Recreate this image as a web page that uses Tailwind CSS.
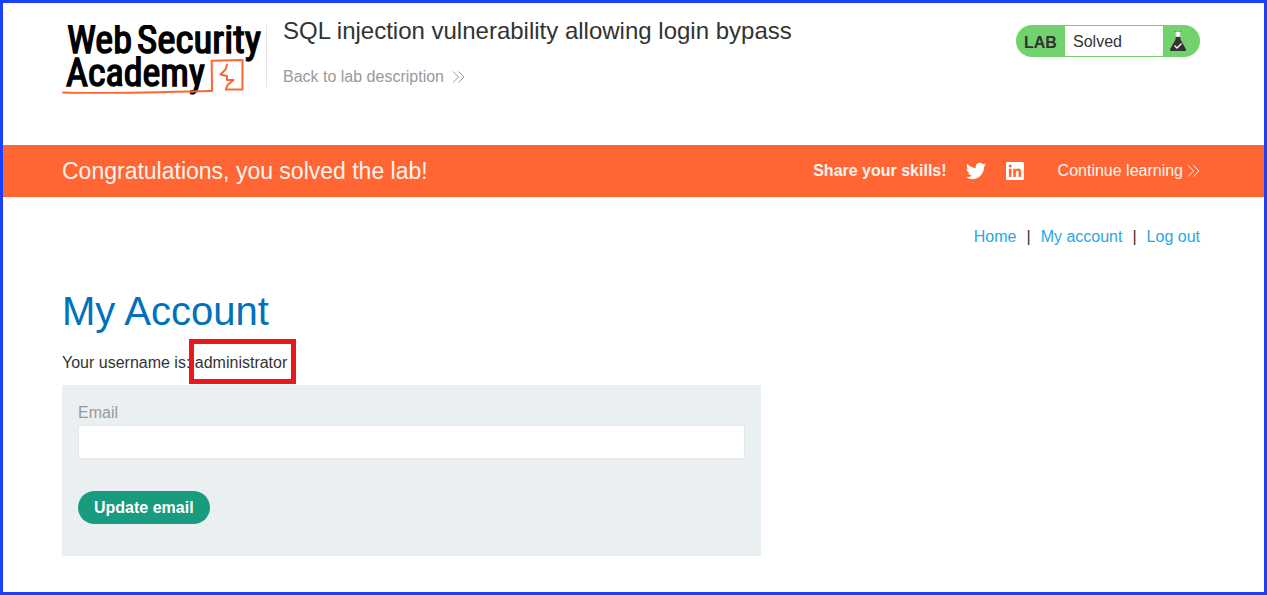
<!DOCTYPE html>
<html lang="en">
<head>
<meta charset="utf-8">
<meta name="viewport" content="width=device-width, initial-scale=1">
<title>SQL injection vulnerability allowing login bypass</title>
<script src="https://cdn.jsdelivr.net/npm/@tailwindcss/browser@4"></script>
</head>
<body class="flex min-h-screen flex-col border-3 border-[#1a40ff] bg-white font-['Liberation_Sans',Arial,sans-serif] text-base text-[#333332]">
  <header class="flex items-start pt-[22px] pr-16 pb-12 pl-[59px]">
    <a href="#" aria-label="Web Security Academy" class="shrink-0">
      <svg class="h-18 w-[204px]" viewBox="0 0 204 72" fill="none">
        <g class="font-['Roboto_Condensed',Roboto,sans-serif] text-[38px]" fill="#000" stroke="#000" stroke-width="1.4">
          <text x="5" y="28">Web</text>
          <text x="75" y="28" class="text-[39px]">Security</text>
          <text x="4" y="61" class="text-[38px]">Academy</text>
        </g>
        <g stroke="#ff6633" stroke-linejoin="round" stroke-linecap="round">
          <path d="M1 67.500C28 68.500 90 67.500 149 66" stroke-width="1.800"/>
          <path d="M150 66L149.700 35.700L180.500 35L180.500 64.500L164 64.500" stroke-width="2"/>
          <path d="M165 39.500L163.500 44.500L158.500 49.500L165 51L165 55L171.500 55L165.500 60L164 64.500" stroke-width="2"/>
        </g>
      </svg>
    </a>
    <div class="h-[62px] border-l border-[#e4e4e4]"></div>
    <div class="ml-4 flex min-w-0 flex-1 flex-col items-start">
      <h1 class="-mt-2 text-2xl leading-7">SQL injection vulnerability allowing login bypass</h1>
      <a href="#" class="mt-5 flex items-center gap-2 leading-6 text-[#999]">Back to lab description
        <svg class="h-3 w-[13px]" viewBox="0 0 13 12" fill="none" stroke="currentColor" stroke-width="1"><path d="M1 .5L6.500 6L1 11.500M6.500 .5L12 6L6.500 11.500"/></svg>
      </a>
    </div>
    <div class="flex h-8 w-46 shrink-0 items-center overflow-hidden rounded-full border-y border-[#72d26e] bg-[#72d26e]">
      <span class="w-[49px] pt-[3px] pl-2 font-bold">LAB</span>
      <span class="flex h-full flex-1 items-center bg-white pt-0.5 pl-2">Solved</span>
      <svg class="ml-[6px] mr-[13px] h-6 w-[18px]" viewBox="0 0 18 24">
        <path d="M6.500 3h5v5.500h-5z" fill="#fff"/>
        <path d="M5 2.500h2v5.500h4V2.500h2" fill="none" stroke="#333332" stroke-opacity=".35" stroke-width=".7"/>
        <path d="M6.500 8h5v2.500L16.800 20q.8 2-1.300 2H2.500q-2.100 0-1.300-2L6.500 10.500z" fill="#333332"/>
        <path d="M5.500 16.500L8 19L12.500 14.500" fill="none" stroke="#fff" stroke-width="1.300"/>
      </svg>
    </div>
  </header>

  <section class="flex h-[52px] items-center bg-[#ff6633] pr-16 pl-[59px] text-[#fff4f0]">
    <p class="flex-1 text-[23px]">Congratulations, you solved the lab!</p>
    <span class="font-bold">Share your skills!</span>
    <a href="#" aria-label="Share on Twitter" class="ml-[19px]">
      <svg class="h-5 w-5" viewBox="0 0 24 24" fill="#fff"><path d="M23.950 4.570a10 10 0 0 1-2.820.77 4.960 4.960 0 0 0 2.160-2.720c-.95.55-2 .95-3.130 1.180a4.920 4.920 0 0 0-8.380 4.480C7.690 8.100 4.070 6.130 1.640 3.160a4.820 4.820 0 0 0-.67 2.480c0 1.710.87 3.210 2.190 4.100a4.900 4.900 0 0 1-2.230-.62v.06a4.920 4.920 0 0 0 3.950 4.830 5 5 0 0 1-2.210.08 4.940 4.940 0 0 0 4.600 3.420A9.870 9.870 0 0 1 0 19.540a14 14 0 0 0 7.550 2.210c9.050 0 14-7.500 14-13.980 0-.21 0-.42-.02-.63a9.940 9.940 0 0 0 2.420-2.570z"/></svg>
    </a>
    <a href="#" aria-label="Share on LinkedIn" class="ml-[19px]">
      <svg class="h-5 w-5" viewBox="0 0 20 20"><rect x="1" y="1" width="18" height="18" rx="1.500" fill="#fff"/><g fill="#ff6633"><circle cx="5.200" cy="5" r="1.500"/><path d="M3.900 7.700h2.600V16H3.900zM8.200 7.700h2.500v1.200c.6-1 1.500-1.400 2.500-1.400 2.400 0 3 1.500 3 3.700V16h-2.600v-4.200c0-1.100-.2-2-1.300-2s-1.500.8-1.500 2V16H8.200z"/></g></svg>
    </a>
    <a href="#" class="ml-[33px] flex items-center gap-1">Continue learning
      <svg class="h-3 w-[13px]" viewBox="0 0 13 12" fill="none" stroke="currentColor" stroke-width="1"><path d="M1 .5L6.500 6L1 11.500M6.500 .5L12 6L6.500 11.500"/></svg>
    </a>
  </section>

  <main class="pt-7 pr-16 pb-9 pl-[59px]">
    <nav class="flex justify-end gap-[10px] text-[#29a7df]">
      <a href="#">Home</a><span class="text-[#333332]">|</span>
      <a href="#">My account</a><span class="text-[#333332]">|</span>
      <a href="#">Log out</a>
    </nav>
    <h2 class="mt-[38px] text-[40px] leading-12 text-[#0071bc]">My Account</h2>
    <p class="mt-4 leading-6">Your username is: <span class="relative">administrator<span class="pointer-events-none absolute -top-[15px] -right-[9px] -bottom-[13px] -left-[6px] border-5 border-[#e9191d]"></span></span></p>
    <form class="mt-[10px] w-full max-w-[699px] bg-[#eaf0f2] px-4 pt-4 pb-8">
      <label for="email" class="block leading-6 text-[#999]">Email</label>
      <input id="email" type="email" class="block h-[34px] w-full border border-[#e4e6e7] bg-white px-2 outline-none">
      <button type="button" class="mt-8 block h-[33px] rounded-full bg-[#189b7e] px-4 font-bold text-white">Update email</button>
    </form>
  </main>
</body>
</html>
